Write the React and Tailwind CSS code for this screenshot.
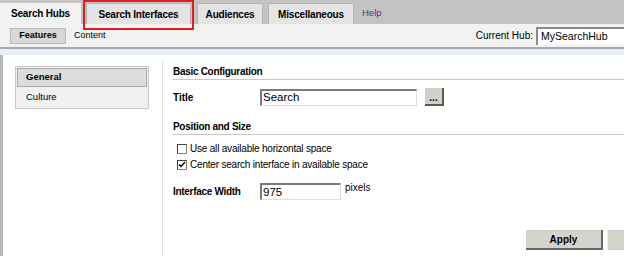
export default function App() {
  const tab =
    "h-[21px] bg-[#e4e4e4] border border-b-0 border-[#b4b4b4] flex items-center justify-center font-bold text-[10px] tracking-[-0.2px] whitespace-nowrap";
  const field =
    "h-[17px] bg-white border-l-2 border-t-2 border-[#7a7a7a] border-r border-b border-r-[#dedede] border-b-[#dedede] flex items-center pl-[1px] text-[11.5px] leading-[13px]";

  return (
    <div className="w-[624px] h-[256px] overflow-hidden bg-white text-[10px] text-black font-['Liberation_Sans',Arial,sans-serif]">
      {/* tab strip */}
      <div className="h-[24px] bg-[#c3c3c3] flex items-end relative">
        <div className="h-[21px] w-[81px] bg-[#f2f2f2] flex items-center justify-center font-bold text-[10px] tracking-[-0.2px] whitespace-nowrap">
          Search Hubs
        </div>
        <div className={`ml-[5px] w-[105px] ${tab}`}>Search Interfaces</div>
        <div className={`ml-[6px] w-[66px] ${tab}`}>Audiences</div>
        <div className={`ml-[5px] w-[86px] ${tab}`}>Miscellaneous</div>
        <div className="ml-[8px] h-[21px] flex items-center text-[#3a3a9e] text-[9.5px]">Help</div>
        {/* red highlight annotation */}
        <div className="absolute left-[83px] top-0 w-[111px] h-[30px] border-2 border-[#e02020] pointer-events-none z-10" />
      </div>

      {/* sub bar */}
      <div className="h-[23px] bg-[#f2f2f2] flex items-center pl-[10px] text-[9px]">
        <div className="h-[16px] w-[56px] bg-[#d9d9d9] border border-[#b8b8b8] flex items-center justify-center font-bold">
          Features
        </div>
        <div className="ml-[8px]">Content</div>
        <div className="ml-auto flex items-center">
          <span className="mr-[3px] text-[10px]">Current Hub:</span>
          <div className="h-[18px] w-[88px] bg-white border-l-2 border-t-2 border-[#8a8a8a] flex items-center pl-[3px] text-[10.5px]">
            MySearchHub
          </div>
        </div>
      </div>
      <div className="h-[2px] bg-[#a9a9a9]" />
      <div className="h-[6px] bg-[#e9eefb]" />

      {/* body */}
      <div className="flex h-[201px] border-l-[3px] border-[#b7b7b7]">
        {/* left nav */}
        <div className="w-[159px] pt-[11px] pl-[12px] flex">
          <div className="w-[134px] h-[43px] border border-[#c8c8c8] bg-[#f1f1f1] p-[1px] text-[9.5px]">
            <div className="h-[19px] bg-[#dcdcdc] border border-[#a8a8a8] flex items-center pl-[8px] font-bold">
              General
            </div>
            <div className="h-[20px] flex items-center pl-[9px]">Culture</div>
          </div>
        </div>
        <div className="mt-[6px] w-px bg-[#dedede]" />

        {/* main */}
        <div className="flex-1 pl-[9px] pt-[10px] relative">
          <div className="h-[15px] leading-[14px] font-bold border-b border-[#c8c8c8] pl-[1px] tracking-[-0.3px]">
            Basic Configuration
          </div>
          <div className="flex items-center mt-[8px] h-[18px]">
            <div className="w-[88px] font-bold pl-[1px]">Title</div>
            <div className={`w-[157px] ${field}`}>Search</div>
            <div className="ml-[8px] w-[19px] h-[18px] bg-[#d4d0c8] border-r-2 border-b-2 border-[#5a5a5a] flex items-end justify-center text-[10px] leading-[12px] font-bold">
              ...
            </div>
          </div>

          <div className="mt-[14px] h-[15px] leading-[14px] font-bold border-b border-[#c8c8c8] pl-[1px] tracking-[-0.3px]">
            Position and Size
          </div>
          <div className="mt-[7px] pl-[5px] flex flex-col gap-[3px] tracking-[-0.2px]">
            <div className="flex items-center h-[13px]">
              <span className="w-[10px] h-[10px] border border-[#808080] border-t-[#404040] border-l-[#404040] bg-white mr-[3px]" />
              Use all available horizontal space
            </div>
            <div className="flex items-center h-[13px]">
              <span className="w-[10px] h-[10px] border border-[#808080] border-t-[#404040] border-l-[#404040] bg-white mr-[3px] flex items-center justify-center">
                <svg width="8" height="8" viewBox="0 0 8 8">
                  <path d="M1 3.5 L3 5.5 L7 1" stroke="#000" strokeWidth="1.5" fill="none" />
                </svg>
              </span>
              Center search interface in available space
            </div>
          </div>

          <div className="flex items-start mt-[12px]">
            <div className="w-[88px] font-bold pl-[1px] pt-[1px] tracking-[-0.3px]">Interface Width</div>
            <div className={`w-[81px] ${field}`}>975</div>
            <div className="ml-[4px] leading-[10px]">pixels</div>
          </div>

          <div className="absolute right-0 bottom-[6px] flex gap-[4px]">
            <div className="w-[77px] h-[20px] bg-[#d6d3cc] border-r-2 border-b-2 border-[#666] flex items-center justify-center font-bold text-[10px]">
              Apply
            </div>
            <div className="w-[17px] h-[20px] bg-[#d6d3cc] border-l border-[#eee]" />
          </div>
        </div>
      </div>
    </div>
  );
}
